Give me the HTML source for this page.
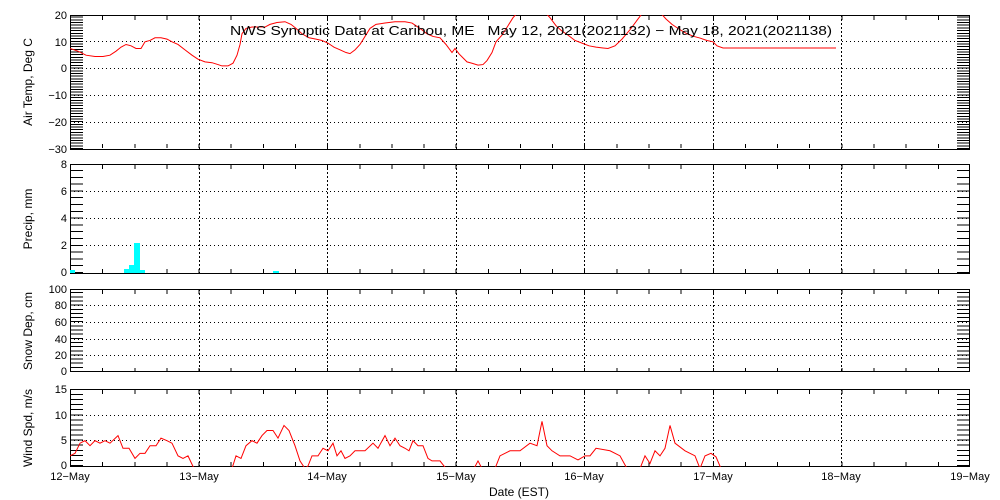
<!DOCTYPE html>
<html><head><style>
html,body{margin:0;padding:0;background:#fff;}
svg{display:block;font-family:"Liberation Sans",sans-serif;}
text{font-size:11px;fill:#000;}
.yl{font-size:12px;}
</style></head><body>
<svg width="1000" height="500" viewBox="0 0 1000 500" xmlns="http://www.w3.org/2000/svg">
<defs>
<clipPath id="c1"><rect x="70" y="15" width="900" height="134"/></clipPath>
<clipPath id="c4"><rect x="70" y="389" width="900" height="78"/></clipPath>
</defs>
<g stroke="#000" fill="none" shape-rendering="crispEdges">
<rect x="70.5" y="15.5" width="899" height="134"/>
<line x1="76.5" y1="149" x2="76.5" y2="15" stroke-width="13" stroke-dasharray="1 1.68"/>
<line x1="963.5" y1="149" x2="963.5" y2="15" stroke-width="13" stroke-dasharray="1 1.68"/>
<g stroke-dasharray="1 3"><line x1="70" y1="41.5" x2="970" y2="41.5"/><line x1="70" y1="68.5" x2="970" y2="68.5"/><line x1="70" y1="95.5" x2="970" y2="95.5"/><line x1="70" y1="122.5" x2="970" y2="122.5"/></g>
<g stroke-dasharray="2 2"><line x1="199.5" y1="15" x2="199.5" y2="149"/><line x1="327.5" y1="15" x2="327.5" y2="149"/><line x1="456.5" y1="15" x2="456.5" y2="149"/><line x1="584.5" y1="15" x2="584.5" y2="149"/><line x1="713.5" y1="15" x2="713.5" y2="149"/><line x1="841.5" y1="15" x2="841.5" y2="149"/></g>
<line x1="70" y1="18" x2="970" y2="18" stroke-width="4" stroke-dasharray="1 31.14"/>
<line x1="70" y1="146" x2="970" y2="146" stroke-width="4" stroke-dasharray="1 31.14"/>
<rect x="70.5" y="164.5" width="899" height="109"/>
<line x1="76.5" y1="273" x2="76.5" y2="164" stroke-width="13" stroke-dasharray="1 5.8"/>
<line x1="963.5" y1="273" x2="963.5" y2="164" stroke-width="13" stroke-dasharray="1 5.8"/>
<g stroke-dasharray="1 3"><line x1="70" y1="191.5" x2="970" y2="191.5"/><line x1="70" y1="218.5" x2="970" y2="218.5"/><line x1="70" y1="245.5" x2="970" y2="245.5"/></g>
<g stroke-dasharray="2 2"><line x1="199.5" y1="164" x2="199.5" y2="273"/><line x1="327.5" y1="164" x2="327.5" y2="273"/><line x1="456.5" y1="164" x2="456.5" y2="273"/><line x1="584.5" y1="164" x2="584.5" y2="273"/><line x1="713.5" y1="164" x2="713.5" y2="273"/><line x1="841.5" y1="164" x2="841.5" y2="273"/></g>
<line x1="70" y1="167" x2="970" y2="167" stroke-width="4" stroke-dasharray="1 31.14"/>
<line x1="70" y1="271" x2="970" y2="271" stroke-width="4" stroke-dasharray="1 31.14"/>
<rect x="70.5" y="289.5" width="899" height="82"/>
<line x1="76.5" y1="372" x2="76.5" y2="289" stroke-width="13" stroke-dasharray="1 3.15"/>
<line x1="963.5" y1="372" x2="963.5" y2="289" stroke-width="13" stroke-dasharray="1 3.15"/>
<g stroke-dasharray="1 3"><line x1="70" y1="305.5" x2="970" y2="305.5"/><line x1="70" y1="322.5" x2="970" y2="322.5"/><line x1="70" y1="339.5" x2="970" y2="339.5"/><line x1="70" y1="355.5" x2="970" y2="355.5"/></g>
<g stroke-dasharray="2 2"><line x1="199.5" y1="289" x2="199.5" y2="372"/><line x1="327.5" y1="289" x2="327.5" y2="372"/><line x1="456.5" y1="289" x2="456.5" y2="372"/><line x1="584.5" y1="289" x2="584.5" y2="372"/><line x1="713.5" y1="289" x2="713.5" y2="372"/><line x1="841.5" y1="289" x2="841.5" y2="372"/></g>
<line x1="70" y1="292" x2="970" y2="292" stroke-width="4" stroke-dasharray="1 31.14"/>
<line x1="70" y1="370" x2="970" y2="370" stroke-width="4" stroke-dasharray="1 31.14"/>
<rect x="70.5" y="389.5" width="899" height="77"/>
<line x1="76.5" y1="466" x2="76.5" y2="389" stroke-width="13" stroke-dasharray="1 4.07"/>
<line x1="963.5" y1="466" x2="963.5" y2="389" stroke-width="13" stroke-dasharray="1 4.07"/>
<g stroke-dasharray="1 3"><line x1="70" y1="415.5" x2="970" y2="415.5"/><line x1="70" y1="440.5" x2="970" y2="440.5"/></g>
<g stroke-dasharray="2 2"><line x1="199.5" y1="389" x2="199.5" y2="466"/><line x1="327.5" y1="389" x2="327.5" y2="466"/><line x1="456.5" y1="389" x2="456.5" y2="466"/><line x1="584.5" y1="389" x2="584.5" y2="466"/><line x1="713.5" y1="389" x2="713.5" y2="466"/><line x1="841.5" y1="389" x2="841.5" y2="466"/></g>
<line x1="70" y1="392" x2="970" y2="392" stroke-width="4" stroke-dasharray="1 31.14"/>
<line x1="70" y1="464" x2="970" y2="464" stroke-width="4" stroke-dasharray="1 31.14"/>
</g>
<g fill="#00ffff">
<rect x="70" y="270" width="5" height="3"/>
<rect x="124" y="269" width="5" height="4"/>
<rect x="129" y="265" width="5" height="8"/>
<rect x="134" y="243" width="6" height="30"/>
<rect x="140" y="270" width="5" height="3"/>
<rect x="273" y="271" width="6" height="2"/>
</g>
<g clip-path="url(#c1)">
<g transform="translate(0,68.6) scale(1,-2.68)">
<polyline fill="none" stroke="#f00" stroke-width="1" vector-effect="non-scaling-stroke" points="70,7.5 78,6.5 86,5 95,4.5 103,4.5 110,5 116,6.5 121,8 126,9 131,8.5 136,7.5 141,7.5 145,10 150,10.5 155,11.5 161,11.5 167,11 172,10 178,9 185,7 192,5 198,3.5 205,2.5 212,2.2 218,1.5 222,1 228,1 233,2 237,5 240,9 242,13 246,15 252,15.5 258,15.5 265,15.5 270,16.5 277,17.2 285,17.5 291,16.5 296,15 302,13 309,11.5 316,11 322,10.5 328,9.5 334,8 340,7 346,6 350,5.6 355,7 360,9 365,12 370,15 376,16.5 385,17 395,17.5 405,17.5 412,17 420,15 427,13 433,12 440,11.5 446,9 452,6 455,7.5 459,5.5 463,4 467,2.5 472,2 478,1.3 483,1.5 487,3 492,6 496,10 502,12.5 508,16 513,19 518,21 545,21 550,19 556,16 562,14 568,12.5 575,10.5 582,9.5 589,8.5 596,8 603,7.7 608,7.5 615,8.5 622,11 630,14.5 637,18 643,21 660,21 666,18.5 672,16.5 680,14.5 687,13 694,12 700,11.4 707,10.5 713,10 717,8.5 723,7.7 836,7.7"/>
</g></g>
<g clip-path="url(#c4)">
<g transform="translate(0,466) scale(1,-5.07)">
<polyline fill="none" stroke="#f00" stroke-width="1" vector-effect="non-scaling-stroke" points="70,2 75,2.5 80,4.5 85,5 90,4 95,5 100,4.5 105,5 110,4.5 118,6 123,3.5 129,3.5 135,1.5 140,2.5 145,2.5 150,4 156,4 161,5.5 167,5 172,4.5 178,2 183,1.5 188,2 194,-0.5 232,-0.5 236,2 241,1.5 246,4 252,5 257,4.5 262,6 267,7 273,7 278,5.5 284,8 289,7 295,4 300,1 305,-0.5 308,0 312,2 318,2 323,3.5 328,3 333,4.5 337,2 341,3 345,1.5 350,2 355,3 365,3 373,4.5 378,3.5 385,6 390,4 395,5.5 400,4 405,3.5 409,3 413,5 418,4 423,4 428,1.5 432,1 440,1 446,-0.5 474,-0.5 478,1 482,-0.5 495,-0.5 500,2 510,3 520,3 530,4.5 537,4 542,8.8 547,4 552,3 560,2 570,2 578,1.2 585,2 590,2 596,3.5 610,3 620,2 627,-0.5 640,-0.5 645,2 650,0.5 655,3 660,2 665,3.5 670,8 675,4.5 685,3 695,2 700,-0.5 705,2 711,2.5 716,1.8 721,-0.5"/>
</g></g>
<g text-anchor="end">
<text x="67" y="19">20</text><text x="67" y="46">10</text><text x="67" y="72">0</text><text x="67" y="99">−10</text><text x="67" y="126">−20</text><text x="67" y="153">−30</text>
<text x="67" y="168">8</text><text x="67" y="195">6</text><text x="67" y="222">4</text><text x="67" y="249">2</text><text x="67" y="276">0</text>
<text x="67" y="293">100</text><text x="67" y="309">80</text><text x="67" y="326">60</text><text x="67" y="343">40</text><text x="67" y="359">20</text><text x="67" y="375">0</text>
<text x="67" y="393">15</text><text x="67" y="419">10</text><text x="67" y="444">5</text><text x="67" y="469">0</text>
</g>
<g text-anchor="middle">
<text x="70" y="480">12−May</text><text x="199" y="480">13−May</text><text x="327" y="480">14−May</text><text x="456" y="480">15−May</text><text x="584" y="480">16−May</text><text x="713" y="480">17−May</text><text x="841" y="480">18−May</text><text x="970" y="480">19−May</text>
<text x="519" y="496" class="yl">Date (EST)</text>
<text class="yl" transform="translate(32,82) rotate(-90)">Air Temp, Deg C</text>
<text class="yl" transform="translate(32,219) rotate(-90)">Precip, mm</text>
<text class="yl" transform="translate(32,331) rotate(-90)">Snow Dep, cm</text>
<text class="yl" transform="translate(32,428) rotate(-90)">Wind Spd, m/s</text>
</g>
<text x="230" y="35" style="font-size:13px" textLength="602" lengthAdjust="spacingAndGlyphs" xml:space="preserve">NWS Synoptic Data at Caribou, ME   May 12, 2021(2021132) − May 18, 2021(2021138)</text>
</svg>
</body></html>
